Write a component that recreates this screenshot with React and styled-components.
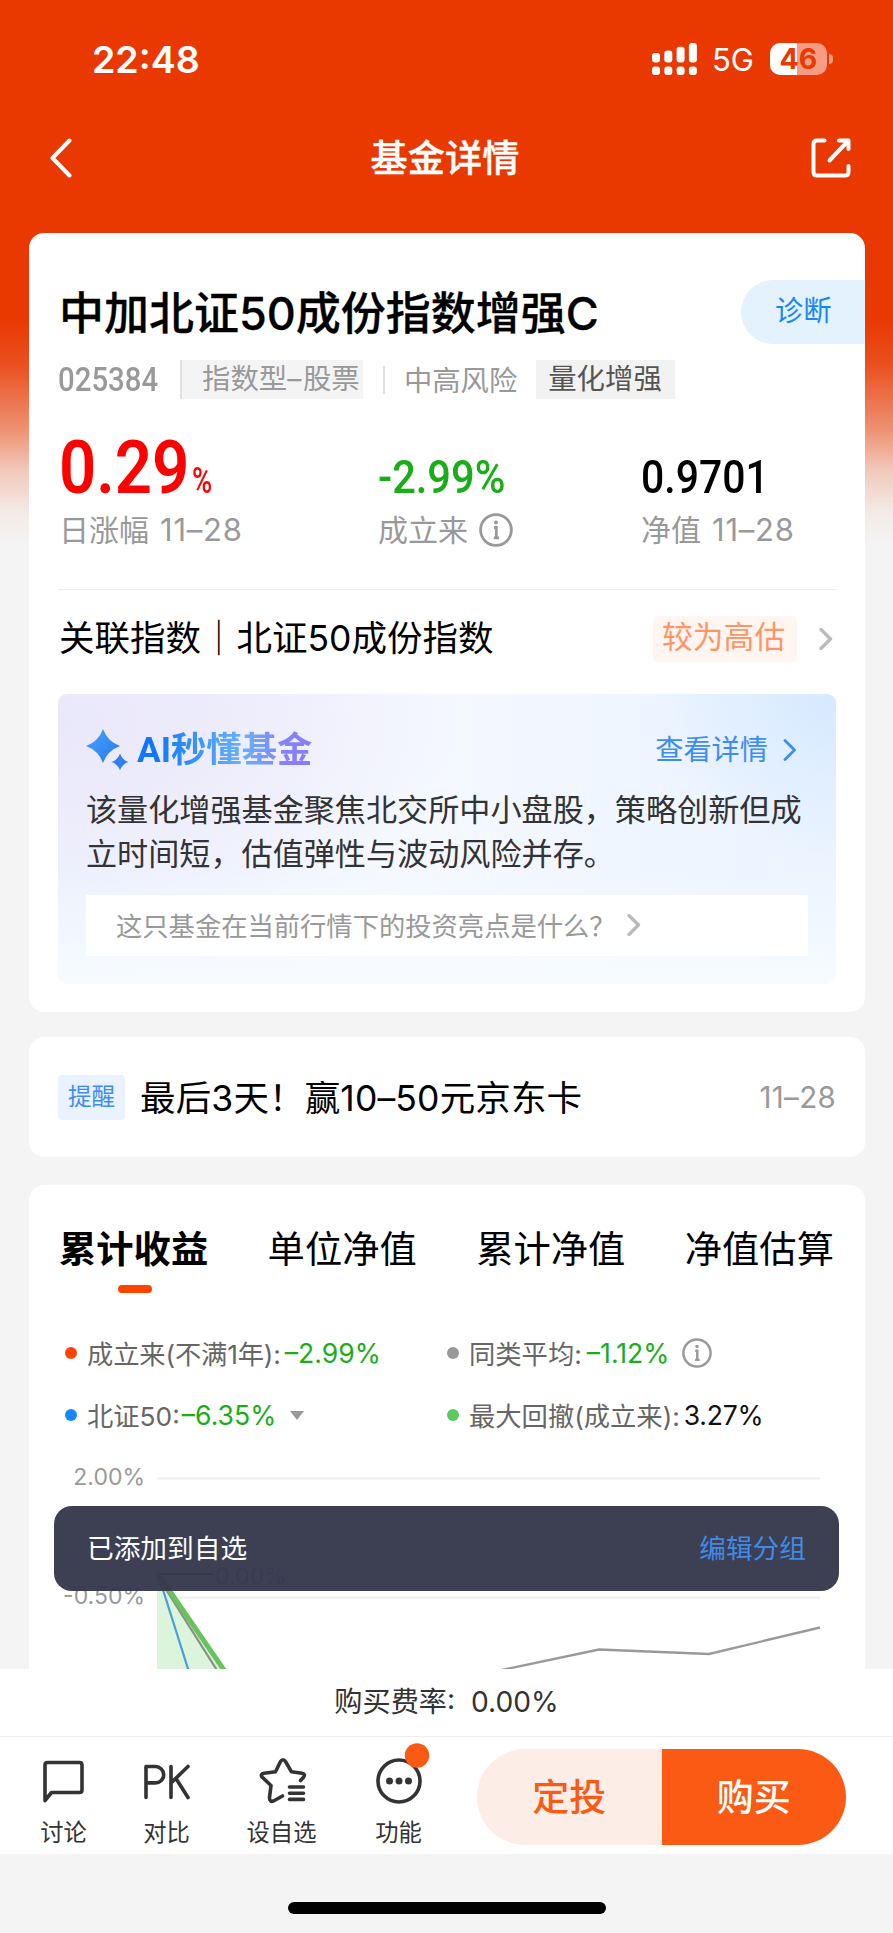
import React from 'react'
import styled, { createGlobalStyle } from 'styled-components'

const tabs = ['累计收益', '单位净值', '累计净值', '净值估算']

const GlobalStyle = createGlobalStyle`
  * {
    box-sizing: border-box;
  }
  body {
    margin: 0;
    background: #f4f4f4;
    font-family: Inter, 'Noto Sans CJK SC', sans-serif;
    font-weight: 370;
    color: #000;
  }
  svg {
    display: block;
    flex-shrink: 0;
  }
`

const Page = styled.div`
  position: relative;
  width: 893px;
  height: 1933px;
  display: flex;
  flex-direction: column;
  overflow: hidden;
  white-space: nowrap;
  background: linear-gradient(
    180deg,
    #e93800 0,
    #e93800 318px,
    #ea5020 365px,
    #ee9273 430px,
    #f1c8ba 470px,
    #f3e9e5 510px,
    #f4f4f4 545px
  );
`

const Text = styled.span`
  font-size: ${(p) => p.$size}px;
  font-weight: ${(p) => p.$weight || 'inherit'};
  color: ${(p) => p.$color || 'inherit'};
  letter-spacing: ${(p) => p.$track || 0}px;
  margin-left: ${(p) => p.$ml || 0}px;
  padding-bottom: ${(p) => p.$lift || 0}px;
  -webkit-text-stroke: ${(p) => p.$stroke || 0}px currentColor;
`

const Num = styled.span`
  display: inline-block;
  font-family: Roboto, sans-serif;
  font-size: ${(p) => p.$size}px;
  font-weight: ${(p) => p.$weight || 500};
  color: ${(p) => p.$color};
  transform: scaleX(${(p) => p.$squeeze});
  transform-origin: left;
  width: ${(p) => p.$w}px;
`

const StatusBar = styled.div`
  height: 118px;
  padding: 0 60px 0 92px;
  display: flex;
  align-items: center;
  color: #fff;
`

const Signal = styled.div`
  margin-left: auto;
  display: flex;
  align-items: center;
`

const Battery = styled.div`
  width: 57px;
  height: 32px;
  margin-left: 16px;
  border-radius: 10px;
  display: flex;
  align-items: center;
  justify-content: center;
  background: linear-gradient(90deg, #fff 27px, #f79c82 27px);
  color: #e93800;
  font-size: 28.5px;
  font-weight: 700;
  line-height: 32px;
`

const BatteryCap = styled.div`
  width: 4px;
  height: 10px;
  margin-left: 2px;
  border-radius: 0 4px 4px 0;
  background: #f79c82;
`

const NavBar = styled.div`
  height: 80px;
  padding: 0 42px 0 49px;
  display: flex;
  align-items: center;
  justify-content: space-between;
  color: #fff;
`

const Content = styled.div`
  height: 1471px;
  flex-shrink: 0;
  padding: 35px 28px 0 29px;
  overflow: hidden;
`

const Card = styled.div`
  height: ${(p) => p.$h}px;
  margin-bottom: ${(p) => p.$mb || 0}px;
  padding: ${(p) => p.$pad || '0 29px'};
  border-radius: 15px;
  background: #fff;
`

const TitleRow = styled.div`
  height: 64px;
  margin-right: -29px;
  display: flex;
  align-items: center;
  justify-content: space-between;
`

const DiagnoseButton = styled.div`
  width: 124px;
  height: 64px;
  padding-left: 34px;
  border-radius: 32px 0 0 32px;
  background: #e4f2fe;
  color: #1587f8;
  font-size: 28.3px;
  font-weight: 400;
  line-height: 62px;
`

const MetaRow = styled.div`
  height: 39px;
  margin-top: 16px;
  display: flex;
  align-items: center;
  color: #999;
`

const Tag = styled.span`
  height: 39px;
  width: ${(p) => p.$w}px;
  padding-left: ${(p) => p.$pl}px;
  margin-left: ${(p) => p.$ml || 0}px;
  border-left: ${(p) => (p.$line ? '2px solid #e2e2e2' : 'none')};
  background: ${(p) => p.$bg};
  color: ${(p) => p.$color};
  font-size: 28.4px;
  line-height: 38px;
`

const Separator = styled.span`
  width: 2px;
  height: 28px;
  margin: 0 19px 0 20px;
  background: #e2e2e2;
`

const Stats = styled.div`
  height: 160px;
  margin-top: 31px;
  padding-left: 1px;
  display: grid;
  grid-template-columns: 319px 263px 1fr;
  border-bottom: 1.5px solid #eee;
`

const StatValue = styled.div`
  height: 75px;
  padding-top: ${(p) => p.$top || 0}px;
  display: flex;
  align-items: baseline;
  line-height: 75px;
`

const StatLabel = styled.div`
  height: 50px;
  display: flex;
  align-items: center;
  font-size: 30px;
  color: #999;
  svg {
    margin-left: 11px;
  }
`

const IndexRow = styled.div`
  height: 104px;
  padding: 0 3px 6px 0;
  display: flex;
  align-items: center;
`

const LevelTag = styled.span`
  width: 144px;
  height: 46px;
  margin: 0 22px 0 auto;
  padding-left: 9px;
  border-radius: 4px;
  background: #fff6f2;
  color: #ff9566;
  font-size: 30.8px;
  line-height: 41px;
`

const AiBox = styled.div`
  height: 290px;
  padding: 0 28px;
  border-radius: 9px;
  background:
    linear-gradient(180deg, rgba(247, 251, 255, 0) 60%, #f7fbff 100%),
    radial-gradient(ellipse 200px 170px at 100% 0, #d6e9ff 0, rgba(214, 233, 255, 0) 100%),
    radial-gradient(ellipse 400px 200px at 0 10%, #e9e7fa 0, rgba(238, 235, 251, 0.75) 50%, rgba(243, 243, 254, 0) 100%),
    linear-gradient(90deg, #ecf2fe, #f5f8ff 45%, #ebf4ff);
`

const AiHead = styled.div`
  height: 98px;
  padding: 14px 11px 0 0;
  display: flex;
  align-items: center;
`

const AiTitle = styled.span`
  margin-left: 8px;
  font-family: Roboto, 'Noto Sans CJK SC', sans-serif;
  font-size: 35.3px;
  font-weight: 700;
  line-height: 50px;
  background: linear-gradient(90deg, #0f77ff 10%, #68b2fa 60%, #8481fb 85%, #8a7bfa);
  background-clip: text;
  -webkit-background-clip: text;
  color: transparent;
`

const AiLink = styled.span`
  margin: 0 15px 0 auto;
  padding-bottom: 6px;
  font-size: 28.2px;
  color: #3d8cf2;
`

const AiText = styled.p`
  margin: -3px 0 0;
  font-size: 31.12px;
  line-height: 43.5px;
  color: #333;
`

const AiQuestion = styled.div`
  width: 722px;
  height: 61px;
  margin-top: 19px;
  padding: 0 0 2px 30px;
  display: flex;
  align-items: center;
  background: #fff;
  color: #999;
  font-size: 26.3px;
  svg {
    margin-left: 11px;
  }
`

const NoticeRow = styled.div`
  height: 120px;
  display: flex;
  align-items: center;
`

const NoticeBadge = styled.span`
  width: 67px;
  height: 45px;
  border-radius: 4px;
  background: #e9f2fe;
  color: #3d8cf5;
  font-size: 23.6px;
  line-height: 43px;
  text-align: center;
`

const NoticeDate = styled.span`
  margin-left: auto;
  font-size: 29.5px;
  letter-spacing: 0.3px;
  color: #999;
`

const TabRow = styled.div`
  display: flex;
  justify-content: space-between;
  padding: 38px 2px 0 1px;
`

const Tab = styled.div`
  font-size: 37.3px;
  font-weight: ${(p) => (p.$active ? 700 : 'inherit')};
  line-height: 54px;
  &::after {
    content: '';
    display: block;
    width: 34px;
    height: 8px;
    margin: 8px auto 0;
    border-radius: 4px;
    background: ${(p) => (p.$active ? '#ff4400' : 'transparent')};
    transform: translateX(1px);
  }
`

const Legend = styled.div`
  margin-top: 29px;
  padding-left: 7px;
  display: grid;
  grid-template-columns: 382px 1fr;
  grid-auto-rows: 62px;
`

const LegendItem = styled.div`
  display: flex;
  align-items: center;
  font-size: 26.3px;
  color: #666;
  svg {
    margin-left: 13px;
  }
  &::before {
    content: '';
    width: 12px;
    height: 12px;
    margin-right: 10px;
    border-radius: 50%;
    background: ${(p) => p.$dot};
  }
`

const ChartText = styled.text`
  font-family: Inter, sans-serif;
  font-size: 23px;
  fill: #999;
`

const Toast = styled.div`
  position: absolute;
  left: 54px;
  top: 1506px;
  width: 785px;
  height: 85px;
  padding: 0 33px;
  border-radius: 18px;
  background: rgba(54, 56, 77, 0.965);
  color: #fff;
  font-size: 26.7px;
  line-height: 27px;
  display: flex;
  align-items: center;
  justify-content: space-between;
`

const FeeBar = styled.div`
  height: 68px;
  padding-bottom: 6px;
  display: flex;
  align-items: center;
  justify-content: center;
  background: #fff;
  border-bottom: 1.5px solid #eceeee;
  font-size: 28.2px;
  color: #333;
`

const ActionBar = styled.div`
  height: 117px;
  padding: 12px 47px 0 30px;
  display: flex;
  background: #fff;
`

const Action = styled.div`
  width: ${(p) => p.$w}px;
  display: flex;
  flex-direction: column;
  align-items: center;
  font-size: 23.3px;
  line-height: 32px;
  color: #333;
  svg {
    margin: 9px 0 13px;
    overflow: visible;
  }
`

const BuyGroup = styled.div`
  width: 369px;
  height: 96px;
  margin-left: auto;
  display: flex;
  border-radius: 48px;
  overflow: hidden;
`

const BuyButton = styled.div`
  flex: 1;
  text-align: center;
  font-size: 37px;
  font-weight: 500;
  line-height: 97px;
  color: ${(p) => (p.$primary ? '#fff' : '#fb5a14')};
  background: ${(p) => (p.$primary ? '#fb5a14' : '#fcede6')};
`

const HomeArea = styled.div`
  flex: 1;
  padding-top: 48px;
  background: #f4f4f4;
`

const HomeIndicator = styled.div`
  width: 318px;
  height: 12px;
  margin: 0 auto;
  border-radius: 6px;
  background: #000;
`

const Chevron = ({ w = 14, h = 22, color = '#bbb', stroke = 3.4 }) => (
  <svg width={w} height={h} viewBox="0 0 14 22" fill="none" stroke={color} strokeWidth={stroke}>
    <path d="M2 1.5 11.5 11 2 20.5" strokeLinecap="round" strokeLinejoin="round" />
  </svg>
)

const InfoIcon = ({ size }) => (
  <svg width={size} height={size} viewBox="0 0 34 34" fill="none" stroke="#999" strokeWidth="2.8">
    <circle cx="17" cy="17" r="15.4" />
    <path d="M15 14.5H17.3V24.5M14.8 24.8H20" strokeWidth="2.8" />
    <circle cx="17" cy="9.6" r="2" fill="#999" stroke="none" />
  </svg>
)

const SignalIcon = () => (
  <svg width="46" height="32" viewBox="0 0 46 32" fill="#fff">
    {[10, 7.5, 3.8, 0].map((top, i) => (
      <React.Fragment key={top}>
        <rect x={i * 12.3} y={top} width="8" height={19.5 - top} rx="3" />
        <rect x={i * 12.3} y="23.5" width="8" height="8.5" rx="3" />
      </React.Fragment>
    ))}
  </svg>
)

const Chart = () => (
  <svg width="778" height="232" viewBox="58 1446 778 232">
    <path d="M157 1478.5H820M157 1597.5H820" stroke="#eee" strokeWidth="2" />
    <ChartText x="145" y="1485" textAnchor="end">2.00%</ChartText>
    <ChartText x="145" y="1604" textAnchor="end">-0.50%</ChartText>
    <path d="M157 1574H213" stroke="#222" strokeWidth="2" />
    <ChartText x="215" y="1583.5">0.00%</ChartText>
    <path d="M157 1574 225 1672V1680H157Z" fill="#dcf4dc" />
    <g fill="none">
      <path d="M160 1580 220 1675" stroke="#8a8f88" strokeWidth="2.2" />
      <path d="M158 1574 190 1675" stroke="#4a9fd6" strokeWidth="2.2" />
      <path d="M158 1574 226 1673" stroke="#67c35c" strokeWidth="5" />
      <path d="M497 1671 599 1649.5 709 1654 820 1627.5" stroke="#999" strokeWidth="2.4" />
    </g>
  </svg>
)

export default function App() {
  return (
    <Page>
      <GlobalStyle />
      <StatusBar>
        <Text $size={37.5} $weight={600}>22:48</Text>
        <Signal>
          <SignalIcon />
          <Text $size={31} $weight={400} $ml={14}>5G</Text>
          <Battery>46</Battery>
          <BatteryCap />
        </Signal>
      </StatusBar>
      <NavBar>
        <svg width="24" height="40" viewBox="0 0 24 40" fill="none" stroke="#fff" strokeWidth="4">
          <path d="M20.5 2.5 3.5 20 20.5 37.5" strokeLinecap="round" strokeLinejoin="round" />
        </svg>
        <Text $size={37.2} $weight={500} $ml={6} $lift={4} $stroke={0.4}>基金详情</Text>
        <svg width="40" height="40" viewBox="0 0 40 40" fill="none" stroke="#fff" strokeWidth="4" strokeLinecap="round" strokeLinejoin="round">
          <path d="M13.5 2.5H6Q2.5 2.5 2.5 6V34Q2.5 37.5 6 37.5H34Q37.5 37.5 37.5 34V28" />
          <path d="M28 2.5H37.5V11M36.5 3.5 18.5 22.5" />
        </svg>
      </NavBar>

      <Content>
        <Card $h={779} $mb={25} $pad="47px 29px 0">
          <TitleRow>
            <Text $size={45} $weight={500} $ml={1} $lift={4} $stroke={0.3}>中加北证50成份指数增强C</Text>
            <DiagnoseButton>诊断</DiagnoseButton>
          </TitleRow>
          <MetaRow>
            <Num $size={33} $squeeze={0.89} $w={122}>025384</Num>
            <Tag $w={183} $pl={20} $bg="#f4f4f4" $line>指数型<Text $track={1.5}>–</Text>股票</Tag>
            <Separator />
            <Text $size={28.3} $lift={2}>中高风险</Text>
            <Tag $w={139} $pl={12} $ml={19} $bg="#f2f2f2" $color="#555">量化增强</Tag>
          </MetaRow>
          <Stats>
            <div>
              <StatValue>
                <Num $size={75} $squeeze={0.87} $w={133} $weight={600} $color="#f00">0.29</Num>
                <Num $size={37} $squeeze={0.74} $w={30} $color="#f00">%</Num>
              </StatValue>
              <StatLabel>
                <Text $lift={5}>日涨幅</Text>
                <Text $size={31} $ml={11} $track={0.8} $lift={2}>11–28</Text>
              </StatLabel>
            </div>
            <div>
              <StatValue $top={10}>
                <Num $size={46} $squeeze={0.905} $w={130} $color="#1aad19">-2.99%</Num>
              </StatValue>
              <StatLabel>
                <Text $lift={5}>成立来</Text>
                <InfoIcon size={34} />
              </StatLabel>
            </div>
            <div>
              <StatValue $top={10}>
                <Num $size={46} $squeeze={0.89} $w={130}>0.9701</Num>
              </StatValue>
              <StatLabel>
                <Text $lift={5}>净值</Text>
                <Text $size={31} $ml={11} $track={0.8} $lift={2}>11–28</Text>
              </StatLabel>
            </div>
          </Stats>
          <IndexRow>
            <Text $size={35.5} $ml={1} $lift={8}>关联指数｜北证50成份指数</Text>
            <LevelTag>较为高估</LevelTag>
            <Chevron />
          </IndexRow>
          <AiBox>
            <AiHead>
              <svg width="43" height="43" viewBox="0 0 43 43">
                <defs>
                  <linearGradient id="spark" x1="0" y1="0" x2="1" y2="1">
                    <stop offset="0" stopColor="#4ba4f8" />
                    <stop offset="1" stopColor="#2277f5" />
                  </linearGradient>
                </defs>
                <path d="M17 0Q21.5 12.5 34 17Q21.5 21.5 17 34Q12.5 21.5 0 17Q12.5 12.5 17 0Z" fill="url(#spark)" />
                <path d="M34 24.5Q36.2 31 42.5 33Q36.2 35 34 41.5Q31.8 35 25.5 33Q31.8 31 34 24.5Z" fill="#2f80f5" />
              </svg>
              <AiTitle>AI秒懂基金</AiTitle>
              <AiLink>查看详情</AiLink>
              <Chevron color="#3d8cf2" stroke={2.8} />
            </AiHead>
            <AiText>
              该量化增强基金聚焦北交所中小盘股，策略创新但成
              <br />
              立时间短，估值弹性与波动风险并存。
            </AiText>
            <AiQuestion>
              这只基金在当前行情下的投资亮点是什么？
              <Chevron />
            </AiQuestion>
          </AiBox>
        </Card>

        <Card $h={120} $mb={28}>
          <NoticeRow>
            <NoticeBadge>提醒</NoticeBadge>
            <Text $size={35.5} $ml={15} $lift={4} $track={0.15}>最后3天！赢10–50元京东卡</Text>
            <NoticeDate>11–28</NoticeDate>
          </NoticeRow>
        </Card>

        <Card $h={520}>
          <TabRow>
            {tabs.map((tab, i) => (
              <Tab key={tab} $active={i === 0}>{tab}</Tab>
            ))}
          </TabRow>
          <Legend>
            <LegendItem $dot="#ff4400">
              <Text $lift={2} $track={-0.15}>成立来(不满1年):</Text>
              <Text $size={26.6} $ml={4} $color="#1aad19">–2.99%</Text>
            </LegendItem>
            <LegendItem $dot="#999">
              <Text $lift={2}>同类平均:</Text>
              <Text $size={26.6} $ml={5} $color="#1aad19">–1.12%</Text>
              <InfoIcon size={30} />
            </LegendItem>
            <LegendItem $dot="#1587ff">
              <Text $lift={2}>北证50:</Text>
              <Text $size={26.6} $ml={2} $color="#1aad19">–6.35%</Text>
              <svg width="16" height="9" viewBox="0 0 16 9" fill="#999">
                <path d="M1 0H15L8 9Z" />
              </svg>
            </LegendItem>
            <LegendItem $dot="#5cc95c">
              <Text $lift={2}>最大回撤(成立来):</Text>
              <Text $size={26.6} $ml={4} $track={-0.3} $color="#111">3.27%</Text>
            </LegendItem>
          </Legend>
          <Chart />
        </Card>
      </Content>

      <FeeBar>购买费率:&nbsp; 0.00%</FeeBar>
      <ActionBar>
        <Action $w={67}>
          <svg width="46" height="46" viewBox="0.5 0 46 46" fill="none" stroke="#333" strokeWidth="3.6" strokeLinejoin="round">
            <path d="M4.5 42.5V7Q4.5 4.5 7 4.5H39Q41.5 4.5 41.5 7V32Q41.5 34.5 39 34.5H11Z" />
          </svg>
          讨论
        </Action>
        <Action $w={139}>
          <svg width="46" height="46" viewBox="0 0 46 46" fill="none" stroke="#333" strokeWidth="3.6" strokeLinecap="round" strokeLinejoin="round">
            <path d="M2 39.5V8.5H11.5A8.2 8.2 0 0 1 11.5 24.9H2M27 8.5V39.5M44 8.5 27.5 24.5M32 20.5 44 39.5" />
          </svg>
          对比
        </Action>
        <Action $w={91}>
          <svg width="46" height="46" viewBox="-1 0 46 46" fill="none" stroke="#333" strokeWidth="3.6" strokeLinecap="round" strokeLinejoin="round">
            <path d="M40.5 22.5 43.5 19.2Q46 16 42 15.2L31.5 13.8 25.5 3.5Q23 0 20.5 3.5L15.5 13.8 4 15.2Q0 16 2 19L11 27.5 9.5 39.5Q9.5 44.5 13.5 43L22.5 38" />
            <path d="M29.5 29H43.5M29.5 35.2H43.5M29.5 41.4H43.5" />
          </svg>
          设自选
        </Action>
        <Action $w={143}>
          <svg width="46" height="46" viewBox="0 0 46 46">
            <circle cx="23" cy="23" r="21" fill="none" stroke="#333" strokeWidth="3.6" />
            <circle cx="13.5" cy="23" r="3.5" fill="#333" />
            <circle cx="23" cy="23" r="3.5" fill="#333" />
            <circle cx="32.5" cy="23" r="3.5" fill="#333" />
            <circle cx="41" cy="-2.5" r="12.2" fill="#fb5a14" />
          </svg>
          功能
        </Action>
        <BuyGroup>
          <BuyButton>定投</BuyButton>
          <BuyButton $primary>购买</BuyButton>
        </BuyGroup>
      </ActionBar>
      <HomeArea>
        <HomeIndicator />
      </HomeArea>

      <Toast>
        已添加到自选
        <Text $size={26.7} $color="#3f8ae8">编辑分组</Text>
      </Toast>
    </Page>
  )
}
